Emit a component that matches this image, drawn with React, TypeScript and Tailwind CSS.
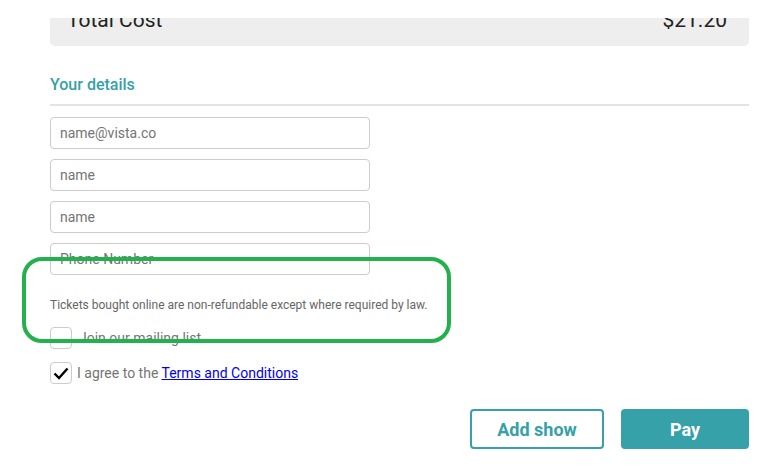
import React from "react";

export default function App() {
  return (
    <div className="relative w-[766px] h-[469px] bg-white overflow-hidden" style={{ fontFamily: "Roboto, 'Liberation Sans', sans-serif" }}>
      <div className="h-[18px]" />
      <div className="mx-[50px] w-[699px]">
        <div className="h-[28px] bg-[#eeeeee] rounded-b-[5px] overflow-hidden flex justify-between px-[17px]">
          <div className="mt-[-8px] text-[21px] leading-none text-[#222]">Total Cost</div>
          <div className="mt-[-8px] text-[21px] leading-none text-[#222] mr-[5px]">$21.20</div>
        </div>
        <div className="mt-[29px] text-[16px] leading-[20px] font-medium text-[#35a1a9]">Your details</div>
        <div className="mt-[9px] h-[2px] bg-[#e3e3e3]" />
        <div className="mt-[11px] flex flex-col gap-[10px] w-[320px]">
          {["name@vista.co", "name", "name", "Phone Number"].map((p, i) => (
            <div key={i} className="h-[32px] border border-[#cccccc] rounded-[4px] flex items-center px-[9px] text-[14px] text-[#757575]">
              {p}
            </div>
          ))}
        </div>
        <div className="mt-[23px] text-[12px] leading-[14px] text-[#666]">
          Tickets bought online are non-refundable except where required by law.
        </div>
        <div className="mt-[15px] flex items-center gap-[7px]">
          <div className="w-[22px] h-[22px] border border-[#cccccc] rounded-[4px]" />
          <span className="text-[14px] text-[#757575]">Join our mailing list</span>
        </div>
        <div className="mt-[13px] flex items-center gap-[5px]">
          <div className="w-[22px] h-[22px] border border-[#cccccc] rounded-[4px] flex items-center justify-center">
            <svg width="18" height="18" viewBox="0 0 18 18">
              <path d="M2.5 9.5 L7 14 L15.5 4.5" fill="none" stroke="#000" strokeWidth="2.4" />
            </svg>
          </div>
          <span className="text-[14px] text-[#757575]">
            I agree to the <a className="text-[#0000ee] underline" href="#">Terms and Conditions</a>
          </span>
        </div>
        <div className="mt-[25px] flex justify-end gap-[17px]">
          <button className="w-[134px] h-[40px] border-2 border-[#35a1a9] rounded-[4px] text-[18px] font-bold text-[#35a1a9]">
            Add show
          </button>
          <button className="w-[128px] h-[40px] bg-[#36a1a9] rounded-[4px] text-[18px] font-bold text-white">
            Pay
          </button>
        </div>
      </div>
      <div className="absolute left-[22px] top-[257px] w-[429px] h-[86px] border-[4px] border-[#22b14c] rounded-[20px] pointer-events-none" />
    </div>
  );
}
